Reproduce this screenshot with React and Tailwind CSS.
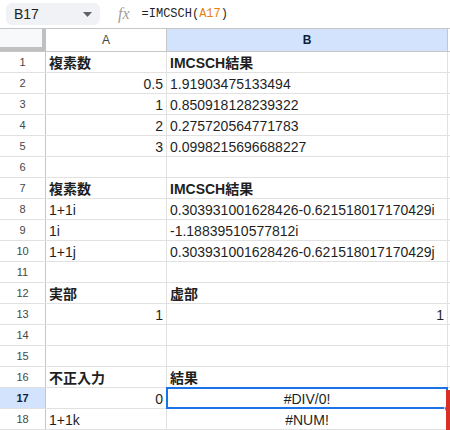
import React from "react";

const rows = [
  { a: "複素数", b: "IMCSCH結果", bold: true },
  { a: "0.5", aAlign: "right", b: "1.91903475133494" },
  { a: "1", aAlign: "right", b: "0.850918128239322" },
  { a: "2", aAlign: "right", b: "0.275720564771783" },
  { a: "3", aAlign: "right", b: "0.0998215696688227" },
  {},
  { a: "複素数", b: "IMCSCH結果", bold: true },
  { a: "1+1i", b: "0.303931001628426-0.621518017170429i" },
  { a: "1i", b: "-1.18839510577812i" },
  { a: "1+1j", b: "0.303931001628426-0.621518017170429j" },
  {},
  { a: "実部", b: "虚部", bold: true },
  { a: "1", aAlign: "right", b: "1", bAlign: "right" },
  {},
  {},
  { a: "不正入力", b: "結果", bold: true },
  { a: "0", aAlign: "right", b: "#DIV/0!", bAlign: "center", selected: true },
  { a: "1+1k", b: "#NUM!", bAlign: "center" },
];

const alignClass = {
  left: "justify-start",
  right: "justify-end",
  center: "justify-center",
};

function Cell({ text, align = "left", bold, width, children }) {
  return (
    <div
      className={`relative flex h-full items-center border-r border-[#e1e1e1] px-[3px] pt-[2px] ${width} ${alignClass[align]} ${bold ? "font-bold" : ""}`}
    >
      <span className="whitespace-nowrap">{text}</span>
      {children}
    </div>
  );
}

export default function App() {
  return (
    <div
      className="relative h-[430px] w-[450px] overflow-hidden bg-white text-[14px] text-[#1f1f1f]"
      style={{ fontFamily: '"Liberation Sans", "Noto Sans CJK JP", sans-serif' }}
    >
      {/* formula bar */}
      <div className="flex h-[28px] items-center">
        <div className="ml-[6px] flex h-[22px] w-[94px] items-center justify-between rounded-[6px] bg-[#f0f2f5] pl-[8px] pr-[8px]">
          <span className="text-[14px] text-[#1f1f1f]">B17</span>
          <svg width="9" height="5" viewBox="0 0 9 5">
            <path d="M0 0 L9 0 L4.5 5 Z" fill="#5f6368" />
          </svg>
        </div>
        <span
          className="ml-[18px] text-[16px] italic text-[#a0a0a0]"
          style={{ fontFamily: '"Liberation Serif", serif' }}
        >
          fx
        </span>
        <span
          className="ml-[12px] text-[12px] text-[#1f1f1f]"
          style={{ fontFamily: '"Liberation Mono", monospace' }}
        >
          =IMCSCH(<span className="text-[#e8820c]">A17</span>)
        </span>
      </div>

      {/* column headers */}
      <div className="flex h-[24px] border-y border-[#c4c7c5]">
        <div className="h-full w-[46px] border-b-[4px] border-r-[4px] border-[#c0c0c0] bg-[#f8f9fa]" />
        <div className="flex h-full w-[121px] items-center justify-center border-r border-[#c4c7c5] text-[12px] text-[#444746]">
          A
        </div>
        <div className="flex h-full w-[281px] items-center justify-center border-r border-[#c4c7c5] bg-[#d3e3fd] text-[12px] font-bold text-[#0b1e3f]">
          B
        </div>
      </div>

      {/* grid rows */}
      {rows.map((r, i) => (
        <div key={i} className="flex h-[21px] border-b border-[#e1e1e1]">
          <div
            className={`flex h-full w-[46px] items-center justify-center border-r border-[#c4c7c5] pt-[1px] text-[11px] ${
              r.selected ? "bg-[#d3e3fd] font-bold text-[#0b1e3f]" : "text-[#444746]"
            }`}
          >
            {i + 1}
          </div>
          <Cell text={r.a} align={r.aAlign} bold={r.bold} width="w-[121px]" />
          <Cell text={r.b} align={r.bAlign} bold={r.bold} width="w-[281px]">
            {r.selected && (
              <>
                <div className="pointer-events-none absolute -left-[1px] -top-[1px] bottom-[-1px] right-[-1px] border-2 border-[#1a73e8]" />
                <div className="absolute bottom-[-4px] right-[-4px] h-[7px] w-[7px] rounded-full border border-white bg-[#1a73e8]" />
              </>
            )}
          </Cell>
        </div>
      ))}

      {/* collaborator marker at the right edge */}
      <div className="absolute right-0 top-[390px] h-[40px] w-[4px] bg-[#d93025]" />
    </div>
  );
}
